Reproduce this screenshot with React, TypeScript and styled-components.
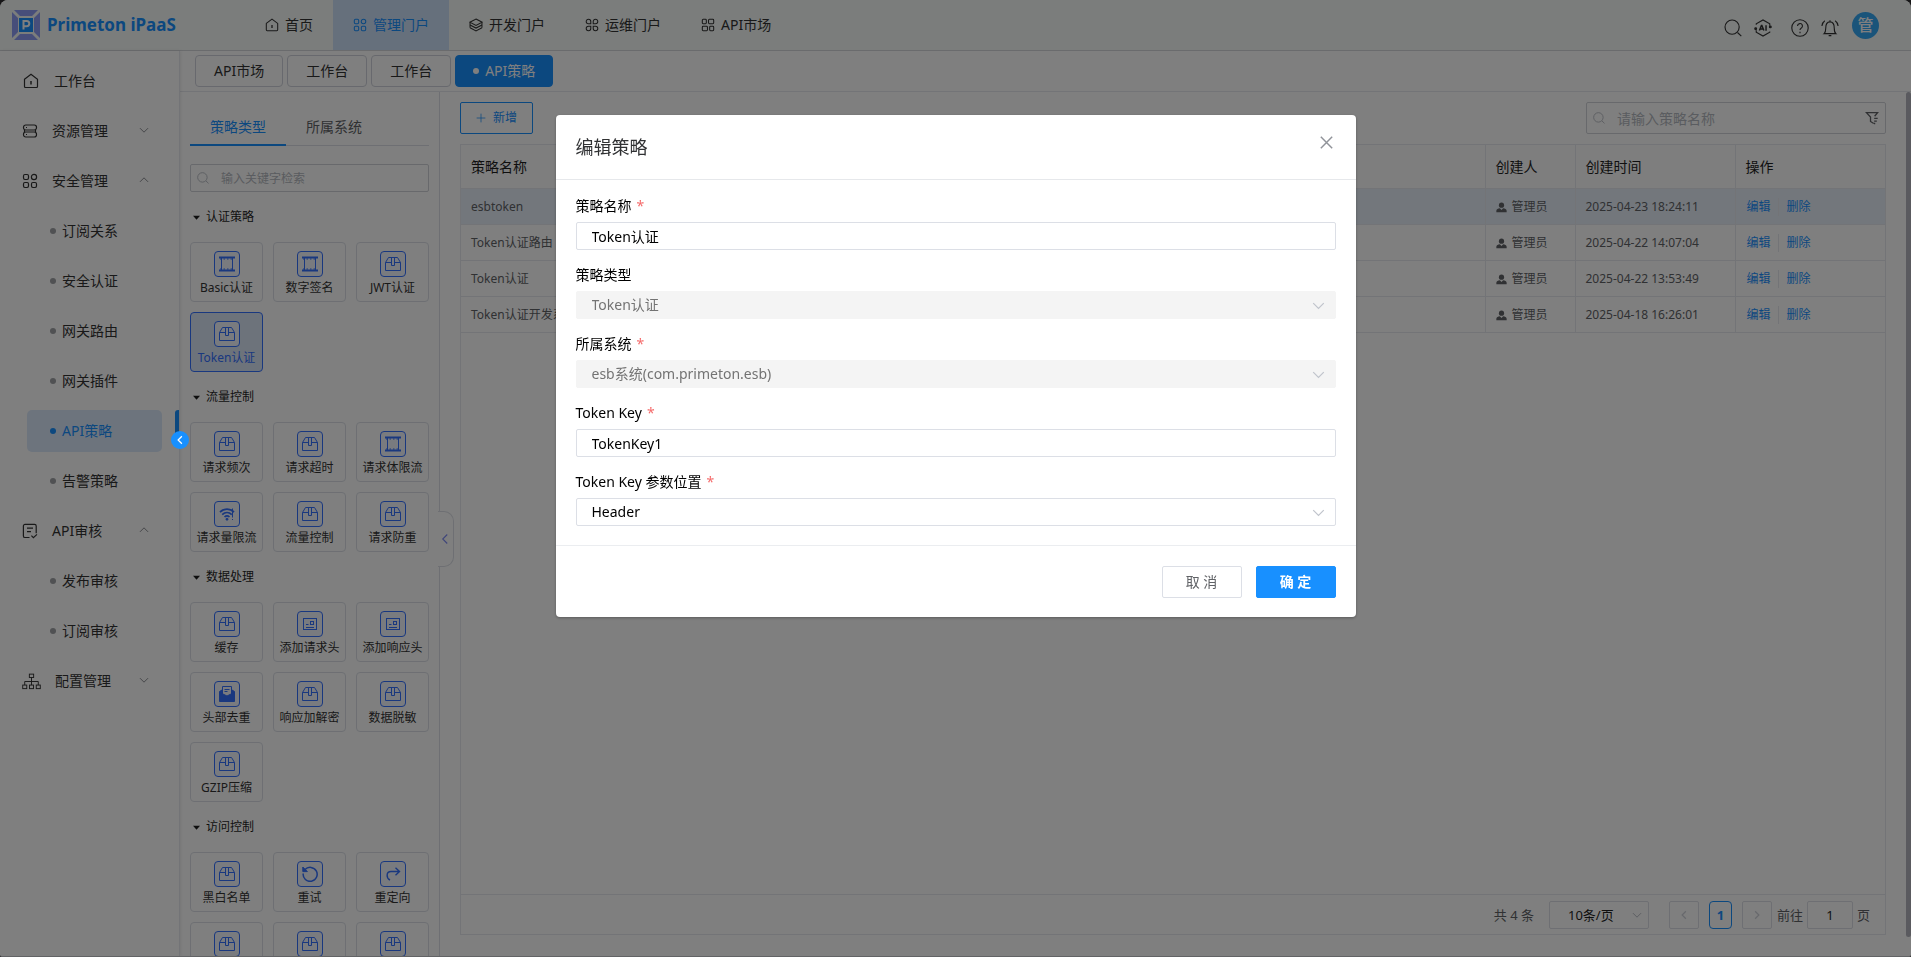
import React, { useState } from 'react';
import styled, { createGlobalStyle } from 'styled-components';

const c = {
  primary: '#1890ff',
  brand: '#3370ff',
  text: '#333333',
  text2: '#606266',
  muted: '#b4b8c0',
  border: '#dcdfe6',
  line: '#e6e8ee',
};

const GlobalStyle = createGlobalStyle`
  *, *::before, *::after { box-sizing: border-box; }
  html { background: #2c2d2f; }
  body {
    margin: 0;
    font-family: "Noto Sans", "Noto Sans CJK SC", sans-serif;
    font-size: 14px;
    line-height: 20px;
    color: ${c.text};
  }
  button, input, select { font: inherit; color: inherit; margin: 0; }
  button { cursor: pointer; padding: 0; background: none; border: 0; }
  svg { display: block; flex: none; }
  a { text-decoration: none; color: inherit; }
  ul { list-style: none; margin: 0; padding: 0; }
`;

/* ---------- icons ---------- */

type IconName =
  | 'home' | 'grid' | 'layers' | 'clover' | 'market' | 'server' | 'audit' | 'tree'
  | 'search' | 'ai' | 'help' | 'bell' | 'filter' | 'user'
  | 'down' | 'up' | 'left' | 'right' | 'close' | 'plus' | 'caret'
  | 'box' | 'film' | 'wifi' | 'card' | 'mail' | 'retry' | 'redirect';

const glyphs: Record<IconName, React.ReactNode> = {
  home: (
    <>
      <path d="M1.5 6.2 8 1.2l6.500 5v7.300a1 1 0 0 1-1 1h-11a1 1 0 0 1-1-1z" />
      <path d="M8 8v3.5" strokeWidth="1.5" />
    </>
  ),
  grid: (
    <>
      <rect x="1.5" y="1.5" width="5" height="5" rx="1.4" />
      <circle cx="12" cy="4" r="2.6" />
      <rect x="1.5" y="9.5" width="5" height="5" rx="1.4" />
      <rect x="9.5" y="9.5" width="5" height="5" rx="1.4" />
    </>
  ),
  layers: (
    <>
      <path d="M8 1.2 15 4.8 8 8.4 1 4.8z" />
      <path d="M1.2 8 8 11.5 14.8 8M1.2 11.2 8 14.7l6.8-3.5" />
      <path d="M1.2 5v6.2M14.8 5v6.2" />
    </>
  ),
  clover: (
    <path d="M6.6 6.6H4A2.6 2.6 0 1 1 6.6 4zM9.4 6.6H12A2.6 2.6 0 1 0 9.4 4zM6.6 9.4H4A2.6 2.6 0 1 0 6.6 12zM9.4 9.4H12A2.6 2.6 0 1 1 9.4 12z" />
  ),
  market: (
    <>
      <rect x="1.5" y="1.5" width="4.6" height="5" rx="1" />
      <rect x="8.6" y="1.5" width="5.9" height="5" rx="1" />
      <rect x="1.5" y="9.5" width="5.9" height="5" rx="1" />
      <rect x="9.9" y="9.5" width="4.6" height="5" rx="1" />
    </>
  ),
  server: (
    <>
      <rect x="1.5" y="2" width="13" height="5" rx="2.2" />
      <rect x="1.5" y="9" width="13" height="5" rx="2.2" />
      <path d="M2.5 7v2M13.5 7v2M4 4.5h1M4 11.5h1" />
    </>
  ),
  audit: (
    <>
      <path d="M7.5 14.5H3a1.6 1.6 0 0 1-1.6-1.6V3A1.6 1.6 0 0 1 3 1.4h9.6A1.6 1.6 0 0 1 14.2 3v7.2" />
      <path d="M5 5.2h6M5 8.6h4M9.4 12.6l2 2 3.6-3.2" />
    </>
  ),
  tree: (
    <>
      <rect x="6.2" y="1.8" width="3.6" height="2.8" />
      <rect x=".6" y="11" width="3.4" height="3" />
      <rect x="6.3" y="11" width="3.4" height="3" />
      <rect x="12" y="11" width="3.4" height="3" />
      <path d="M8 4.6V11M2.3 11V8h11.4v3" />
    </>
  ),
  search: (
    <>
      <circle cx="7.2" cy="7.2" r="6.3" />
      <path d="m12 12 3.4 3.2" />
    </>
  ),
  ai: (
    <>
      <path d="M2 5V4.2L8 .8l6 3.4V6M14 11v.8l-6 3.4-6-3.4V10" />
      <path d="M4.8 10.3 6.6 5.8h.4l1.8 4.5M5.5 8.9h2.6M10.7 5.6v4.8" strokeWidth="1.3" />
      <circle cx="14.5" cy="7" r=".8" fill="currentColor" />
      <circle cx="1.5" cy="8.6" r=".8" fill="currentColor" />
    </>
  ),
  help: (
    <>
      <circle cx="8" cy="8" r="7.3" />
      <path d="M5.8 6.2a2.2 2.2 0 1 1 3.2 2c-.7.4-1 .8-1 1.6" />
      <path d="M8 11.4v1.2" />
    </>
  ),
  bell: (
    <>
      <path d="M2.8 13c1.2-1 1.4-2.3 1.4-4.8C4.2 4.8 5.5 2.6 8 2.6s3.8 2.2 3.8 5.6c0 2.5.2 3.8 1.4 4.8z" />
      <path d="M8 1v1.5M6.8 14.8h2.4" />
      <path d="M3.4 1.6C1.9 2.7 1 4.1.8 6.2M12.6 1.6c1.5 1.1 2.4 2.5 2.6 4.6" />
    </>
  ),
  filter: (
    <>
      <path d="M10 14.3 6.3 12V7L1.6 1.800h12.800L11 6" />
      <path d="M10.5 8.5h4M10.5 11.5h3M10.2 14.3h1.5" />
    </>
  ),
  user: (
    <g fill="currentColor" stroke="none">
      <circle cx="8" cy="4.6" r="3.8" />
      <path d="M.5 15v-2.2C.5 10.8 3 9.4 5.6 9.2L8 11.6l2.4-2.400c2.600.2 5.100 1.600 5.100 3.600V15z" />
    </g>
  ),
  down: <path d="m1.5 5 6.5 6.5L14.5 5" />,
  up: <path d="M1.5 11 8 4.5l6.5 6.5" />,
  left: <path d="M11 2 5 8l6 6" />,
  right: <path d="m5 2 6 6-6 6" />,
  close: <path d="m1 1 14 14M15 1 1 15" />,
  plus: <path d="M8 1v14M1 8h14" />,
  caret: <path d="M0 4h16L8 13z" fill="currentColor" stroke="none" />,
  box: (
    <>
      <path d="M.5 6.5v8h15v-8L12.5 1.5h-9z" />
      <path d="M.5 6.5h6M9.5 6.5h6M6.5 1.5v8h3v-8" />
    </>
  ),
  film: (
    <>
      <path d="M2.5 2v12M13.5 2v12" />
      <path d="M0 1.5h16M0 14.5h16" strokeWidth="2" />
      <path d="M1 3h14M1 13h14" strokeDasharray="1.5 2" />
    </>
  ),
  wifi: (
    <>
      <path d="M1 6.2c4-4 10-4 14 0M3.2 8.6c2.8-2.7 6.8-2.7 9.6 0M5.5 11c1.5-1.4 3.5-1.4 5 0" strokeWidth="1.7" />
      <circle cx="8" cy="13.2" r="1" fill="currentColor" />
      <path d="M13.5 2.5v9M13.5 13v1" />
    </>
  ),
  card: (
    <>
      <rect x="1.5" y="2.5" width="13" height="11" />
      <rect x="8.5" y="5.5" width="3" height="3" />
      <path d="M4 8.5h2.5M4 11.5h8" />
    </>
  ),
  mail: (
    <>
      <path d="M.5 5.5 3 4v3.500l5 2.500 5-2.500V4l2.500 1.500v10H.5z" fill="currentColor" />
      <path d="M3.5 8V.5h9V8M5.5 3.5h5M5.5 5.5h3" />
    </>
  ),
  retry: (
    <>
      <path d="M3 3.6A7 7 0 1 1 1.2 7.5" strokeWidth="1.5" />
      <path d="M.8 1v4.6h4.6z" fill="currentColor" />
    </>
  ),
  redirect: <path d="M5 14C1 12 1 5.5 6 5.5h8M10.5 1.8l4 3.7-4 3.7" strokeWidth="1.4" />,
};

const Icon = ({ name, size = 16, weight = 1.2 }: { name: IconName; size?: number; weight?: number }) => (
  <svg width={size} height={size} viewBox="0 0 16 16" fill="none" stroke="currentColor" strokeWidth={weight} aria-hidden="true">
    {glyphs[name]}
  </svg>
);

const LogoMark = () => (
  <svg width="28" height="30" viewBox="0 0 28 30" aria-hidden="true">
    <path d="M2 0h24l-6 6H8z M2 30h24l-6-6H8z M0 2l6 6v14l-6 6z M28 2l-6 6v14l6 6z" fill="#8f9cf5" />
    <rect x="7" y="8" width="14" height="14" fill={c.primary} />
    <path d="M11.5 19.5V11h3.200a2.500 2.500 0 0 1 0 5.200h-3" fill="none" stroke="#fff" strokeWidth="2" />
  </svg>
);

/* ---------- page frame ---------- */

const Page = styled.div`
  display: flex;
  flex-direction: column;
  height: 100vh;
  overflow: hidden;
  background: #fff;
  border-radius: 8px 8px 2px 2px;
  border-bottom: 1px solid #c4c6ca;
`;

const Header = styled.header`
  display: flex;
  flex: none;
  height: 51px;
  background: #f6faf8;
  border-bottom: 1px solid #d4d6da;
`;

const Brand = styled.a`
  display: flex;
  align-items: center;
  gap: 7px;
  width: 245px;
  padding-left: 12px;
  font-size: 17px;
  font-weight: 700;
  color: ${c.primary};
`;

const TopNav = styled.nav`
  display: flex;
  flex: 1;
`;

const TopLink = styled.a<{ $active?: boolean }>`
  display: flex;
  align-items: center;
  gap: 6px;
  padding: 0 20px;
  color: ${(p) => (p.$active ? c.primary : c.text)};
  background: ${(p) => (p.$active ? '#cde1f8' : 'transparent')};
`;

const HeaderTools = styled.div`
  display: flex;
  align-items: center;
  gap: 13px;
  padding-right: 32px;
`;

const ToolPair = styled.div`
  display: flex;
  gap: 12px;
  padding: 5px 6px 0 0;
  & + & { padding-right: 0; }
`;

const Avatar = styled.button`
  width: 27px;
  height: 27px;
  border-radius: 50%;
  background: #35a8f5;
  color: #fff;
  font-size: 16px;
  font-weight: 500;
`;

const Body = styled.div`
  display: flex;
  flex: 1;
  min-height: 0;
`;

const Sidebar = styled.aside`
  position: relative;
  flex: none;
  width: 180px;
  padding-top: 5px;
  border-right: 1px solid ${c.line};
  box-shadow: 1px 0 3px rgba(0, 0, 0, 0.08);
`;

const MenuLink = styled.a<{ $wide?: boolean }>`
  display: flex;
  align-items: center;
  height: 50px;
  padding: 0 30px 0 ${(p) => (p.$wide ? '23px' : '22px')};
  gap: ${(p) => (p.$wide ? '15px' : '14px')};
  & > span { flex: 1; }
`;

const MenuArrow = styled.i`
  padding-bottom: 3px;
  color: #85888e;
`;

const SubItem = styled.li`
  padding: 4px 17px 4px 27px;
`;

const SubLink = styled.a<{ $active?: boolean }>`
  display: flex;
  align-items: center;
  gap: 6px;
  height: 42px;
  padding-left: 23px;
  border-radius: 5px;
  color: ${(p) => (p.$active ? c.primary : c.text)};
  background: ${(p) => (p.$active ? '#dbe9fa' : 'transparent')};
  &::before {
    content: '';
    width: 6px;
    height: 6px;
    border-radius: 50%;
    background: ${(p) => (p.$active ? c.primary : '#a0a2a6')};
  }
`;

const SideMark = styled.span`
  position: absolute;
  right: 0;
  top: 359px;
  width: 4px;
  height: 32px;
  border-radius: 3px 0 0 0;
  background: ${c.primary};
`;

const SideToggle = styled.button`
  position: absolute;
  right: -10px;
  top: 380px;
  z-index: 1;
  display: grid;
  place-items: center;
  width: 18px;
  height: 18px;
  border-radius: 50%;
  background: ${c.primary};
  color: #fff;
`;

const Workspace = styled.div`
  display: flex;
  flex: 1;
  flex-direction: column;
  min-width: 0;
`;

const PageTabs = styled.nav`
  display: flex;
  flex: none;
  align-items: center;
  gap: 4px;
  height: 41px;
  padding: 0 16px 0 15px;
  border-bottom: 1px solid ${c.line};
`;

const PageTab = styled.button<{ $active?: boolean }>`
  display: flex;
  align-items: center;
  gap: 6px;
  height: 32px;
  padding: 0 ${(p) => (p.$active ? '17px' : '18px')};
  border: 1px solid ${(p) => (p.$active ? c.primary : '#d0d2dc')};
  border-radius: 4px;
  background: ${(p) => (p.$active ? c.primary : '#fff')};
  color: ${(p) => (p.$active ? '#fff' : c.text)};
`;

const TabDot = styled.i`
  width: 6px;
  height: 6px;
  border-radius: 50%;
  background: #fff;
`;

const Content = styled.div`
  display: flex;
  flex: 1;
  min-height: 0;
`;

/* ---------- policy catalogue ---------- */

const Catalogue = styled.section`
  position: relative;
  flex: none;
  width: 260px;
  padding: 18px 10px 0;
  border-right: 1px solid ${c.border};
`;

const CatalogueTabs = styled.div`
  display: flex;
  border-bottom: 1px solid ${c.border};
`;

const CatalogueTab = styled.button<{ $active?: boolean }>`
  height: 36px;
  margin-bottom: -1px;
  padding: 0 20px;
  border-bottom: 2px solid ${(p) => (p.$active ? c.primary : 'transparent')};
  color: ${(p) => (p.$active ? c.primary : c.text2)};
`;

const SearchBox = styled.label<{ $large?: boolean }>`
  display: flex;
  align-items: center;
  gap: 12px;
  width: ${(p) => (p.$large ? '300px' : 'auto')};
  height: ${(p) => (p.$large ? '32px' : '28px')};
  padding: 0 6px;
  border: 1px solid #d0d2d8;
  border-radius: 2px;
  color: ${c.muted};
  font-size: ${(p) => (p.$large ? '14px' : '12px')};
  & > button { color: ${c.text2}; }
`;

const SearchInput = styled.input`
  flex: 1;
  min-width: 0;
  padding: 1px 0 0;
  border: 0;
  outline: 0;
  background: transparent;
  color: ${c.text};
  &::placeholder { color: ${c.muted}; opacity: 1; }
`;

const CatalogueSearch = styled.div`
  padding-top: 18px;
`;

const GroupTitle = styled.button`
  display: flex;
  align-items: center;
  gap: 6px;
  width: 100%;
  height: 50px;
  padding-left: 3px;
  font-size: 12px;
  color: #1f1f1f;
`;

const Tiles = styled.div`
  display: grid;
  grid-template-columns: repeat(3, 1fr);
  gap: 10px;
`;

const Tile = styled.button<{ $active?: boolean }>`
  display: flex;
  flex-direction: column;
  align-items: center;
  gap: 2px;
  height: 60px;
  padding-top: 8px;
  border: 1px solid ${(p) => (p.$active ? c.brand : c.border)};
  border-radius: 4px;
  background: ${(p) => (p.$active ? '#dbe6f6' : '#fff')};
  color: ${(p) => (p.$active ? c.brand : c.text)};
  font-size: 12px;
  line-height: 18px;
  white-space: nowrap;
`;

const TileIcon = styled.span`
  display: grid;
  place-items: center;
  width: 26px;
  height: 26px;
  border: 1px solid ${c.brand};
  border-radius: 4px;
  background: #f3f7ff;
  color: ${c.brand};
`;

const PanelToggle = styled.button`
  position: absolute;
  left: 258px;
  top: 419px;
  display: flex;
  align-items: center;
  width: 16px;
  height: 56px;
  padding-left: 1px;
  border: 1px solid ${c.border};
  border-left: 0;
  border-radius: 0 10px 10px 0;
  background: #fff;
  color: #7f8cf5;
`;

/* ---------- policy list ---------- */

const ListPane = styled.main`
  display: flex;
  flex: 1;
  flex-direction: column;
  gap: 10px;
  min-width: 0;
  padding: 10px 20px 21px 20px;
`;

const Toolbar = styled.div`
  display: flex;
  justify-content: space-between;
`;

const AddButton = styled.button`
  display: flex;
  align-items: center;
  gap: 7px;
  height: 32px;
  padding: 0 15px;
  border: 1px solid ${c.primary};
  border-radius: 2px;
  color: ${c.primary};
  font-size: 12px;
`;

const TableCard = styled.div`
  display: flex;
  flex: 1;
  flex-direction: column;
  justify-content: space-between;
  border: 1px solid ${c.line};
`;

const Table = styled.table`
  width: 100%;
  table-layout: fixed;
  border-collapse: collapse;
  text-align: left;
`;

const Th = styled.th`
  height: 43px;
  padding: 2px 10px 0;
  background: #fcfcfc;
  border-bottom: 1px solid ${c.line};
  font-weight: 400;
  color: #1f1f1f;
  & + & { border-left: 1px solid ${c.line}; }
`;

const Row = styled.tr<{ $active?: boolean }>`
  background: ${(p) => (p.$active ? '#e7eff9' : '#fff')};
`;

const Td = styled.td`
  height: 36px;
  padding: 2px 10px 0;
  border-bottom: 1px solid ${c.line};
  font-size: 12px;
  line-height: 18px;
  color: ${c.text2};
  & + & { border-left: 1px solid ${c.line}; }
`;

const Creator = styled.span`
  display: flex;
  align-items: center;
  gap: 5px;
`;

const Actions = styled.span`
  display: flex;
  align-items: center;
  color: ${c.primary};
  & > a { padding: 0 7px 0 1px; }
  & > a + a { padding: 0 8px; border-left: 1px solid ${c.line}; }
`;

const NameCol = styled.col``;
const FixedCol = styled.col<{ $w: number }>`
  width: ${(p) => p.$w}px;
`;

const Pager = styled.div`
  display: flex;
  align-items: center;
  justify-content: flex-end;
  height: 40px;
  padding-right: 15px;
  border-top: 1px solid ${c.line};
  font-size: 13px;
  color: ${c.text2};
`;

const PageSize = styled.span`
  display: grid;
  align-items: center;
  width: 100px;
  margin: 0 20px 0 15px;
  & > * { grid-area: 1 / 1; }
  & > svg { justify-self: end; margin-right: 7px; color: ${c.muted}; pointer-events: none; }
`;

const PageSizeSelect = styled.select`
  appearance: none;
  height: 28px;
  padding: 0 18px;
  border: 1px solid ${c.border};
  border-radius: 2px;
  background: #fff;
  color: #1f1f1f;
`;

const PageButton = styled.button<{ $current?: boolean }>`
  display: grid;
  place-items: center;
  width: ${(p) => (p.$current ? '23px' : '30px')};
  height: 28px;
  margin: ${(p) => (p.$current ? '0 10px' : '0')};
  border: 1px solid ${(p) => (p.$current ? c.primary : c.border)};
  border-radius: ${(p) => (p.$current ? '4px' : '2px')};
  color: ${(p) => (p.$current ? c.primary : '#d0d3da')};
  font-weight: 700;
`;

const Jump = styled.label`
  display: flex;
  align-items: center;
  gap: 4px;
  padding-left: 5px;
`;

const JumpInput = styled.input`
  width: 46px;
  height: 28px;
  padding: 0;
  border: 1px solid ${c.border};
  border-radius: 2px;
  text-align: center;
  color: #1f1f1f;
`;

const ScrollRail = styled.div`
  flex: none;
  width: 5px;
  margin-bottom: 19px;
  border-radius: 3px;
  background: #b4b5be;
`;

/* ---------- dialog ---------- */

const Backdrop = styled.div`
  position: fixed;
  inset: 0;
  display: flex;
  align-items: flex-start;
  justify-content: center;
  padding-top: 115px;
  background: rgba(0, 0, 0, 0.5);
`;

const Dialog = styled.form`
  width: 800px;
  max-width: 100%;
  background: #fff;
  border-radius: 4px;
  box-shadow: 0 1px 3px rgba(0, 0, 0, 0.3);
`;

const DialogHead = styled.div`
  display: flex;
  align-items: center;
  justify-content: space-between;
  height: 65px;
  padding: 0 23px 0 20px;
  border-bottom: 1px solid #e6e8eb;
  & > button { padding-bottom: 9px; color: #909399; }
`;

const DialogTitle = styled.h2`
  margin: 0;
  font-size: 18px;
  line-height: 24px;
  font-weight: 400;
  color: #303133;
`;

const DialogBody = styled.div`
  display: flex;
  flex-direction: column;
  gap: 14px;
  padding: 15px 20px 19px;
`;

const FieldBox = styled.div`
  display: flex;
  flex-direction: column;
  gap: 5px;
`;

const FieldLabel = styled.label`
  line-height: 22px;
  color: #000;
`;

const Required = styled.span`
  margin-left: 5px;
  color: #f56c6c;
`;

const TextInput = styled.input`
  width: 100%;
  height: 28px;
  padding: 0 15px;
  border: 1px solid ${c.border};
  border-radius: 2px;
  outline: 0;
  background: #fff;
  color: #000;
`;

const SelectWrap = styled.span`
  display: grid;
  align-items: center;
  & > * { grid-area: 1 / 1; }
  & > svg { justify-self: end; margin-right: 11px; color: #c0c4cc; pointer-events: none; }
`;

const SelectInput = styled.select`
  appearance: none;
  width: 100%;
  height: 28px;
  padding: 0 15px;
  border: 1px solid ${c.border};
  border-radius: 2px;
  outline: 0;
  background: #fff;
  color: #000;
  &:disabled {
    border-color: #f4f4f4;
    background: #f4f4f4;
    color: #737373;
    opacity: 1;
  }
`;

const DialogFoot = styled.div`
  display: flex;
  justify-content: flex-end;
  gap: 14px;
  padding: 20px 20px 19px;
  border-top: 1px solid #ebedf0;
`;

const DialogButton = styled.button<{ $primary?: boolean }>`
  width: 80px;
  height: 32px;
  border: 1px solid ${(p) => (p.$primary ? c.primary : c.border)};
  border-radius: 2px;
  background: ${(p) => (p.$primary ? c.primary : '#fff')};
  color: ${(p) => (p.$primary ? '#fff' : c.text2)};
  font-weight: ${(p) => (p.$primary ? 700 : 400)};
`;

/* ---------- data ---------- */

const topLinks: { icon: IconName; label: string }[] = [
  { icon: 'home', label: '首页' },
  { icon: 'grid', label: '管理门户' },
  { icon: 'layers', label: '开发门户' },
  { icon: 'clover', label: '运维门户' },
  { icon: 'market', label: 'API市场' },
];

type MenuEntry = { icon: IconName; label: string; arrow?: 'up' | 'down'; wide?: boolean; children?: string[] };

const menu: MenuEntry[] = [
  { icon: 'home', label: '工作台', wide: true },
  { icon: 'server', label: '资源管理', arrow: 'down' },
  {
    icon: 'grid', label: '安全管理', arrow: 'up',
    children: ['订阅关系', '安全认证', '网关路由', '网关插件', 'API策略', '告警策略'],
  },
  { icon: 'audit', label: 'API审核', arrow: 'up', children: ['发布审核', '订阅审核'] },
  { icon: 'tree', label: '配置管理', arrow: 'down' },
];

const groups: { title: string; items: [IconName, string][] }[] = [
  { title: '认证策略', items: [['film', 'Basic认证'], ['film', '数字签名'], ['box', 'JWT认证'], ['box', 'Token认证']] },
  {
    title: '流量控制',
    items: [
      ['box', '请求频次'], ['box', '请求超时'], ['film', '请求体限流'],
      ['wifi', '请求量限流'], ['box', '流量控制'], ['box', '请求防重'],
    ],
  },
  {
    title: '数据处理',
    items: [
      ['box', '缓存'], ['card', '添加请求头'], ['card', '添加响应头'],
      ['mail', '头部去重'], ['box', '响应加解密'], ['box', '数据脱敏'], ['box', 'GZIP压缩'],
    ],
  },
  {
    title: '访问控制',
    items: [['box', '黑白名单'], ['retry', '重试'], ['redirect', '重定向'], ['box', ''], ['box', ''], ['box', '']],
  },
];

const policies = [
  { name: 'esbtoken', time: '2025-04-23 18:24:11' },
  { name: 'Token认证路由', time: '2025-04-22 14:07:04' },
  { name: 'Token认证', time: '2025-04-22 13:53:49' },
  { name: 'Token认证开发系统', time: '2025-04-18 16:26:01' },
];

/* ---------- views ---------- */

const Field = ({ id, label, required, children }: { id: string; label: string; required?: boolean; children: React.ReactNode }) => (
  <FieldBox>
    <FieldLabel htmlFor={id}>
      {label}
      {required && <Required>*</Required>}
    </FieldLabel>
    {children}
  </FieldBox>
);

const SelectField = ({ id, options, disabled }: { id: string; options: string[]; disabled?: boolean }) => (
  <SelectWrap>
    <SelectInput id={id} disabled={disabled}>
      {options.map((o) => <option key={o}>{o}</option>)}
    </SelectInput>
    <Icon name="down" size={13} weight={1.5} />
  </SelectWrap>
);

const EditDialog = ({ onClose }: { onClose: () => void }) => (
  <Backdrop>
    <Dialog role="dialog" aria-modal="true" aria-labelledby="dialog-title" onSubmit={(e) => { e.preventDefault(); onClose(); }}>
      <DialogHead>
        <DialogTitle id="dialog-title">编辑策略</DialogTitle>
        <button type="button" aria-label="关闭" onClick={onClose}><Icon name="close" size={13} weight={1.8} /></button>
      </DialogHead>
      <DialogBody>
        <Field id="policy-name" label="策略名称" required>
          <TextInput id="policy-name" defaultValue="Token认证" />
        </Field>
        <Field id="policy-type" label="策略类型">
          <SelectField id="policy-type" options={['Token认证']} disabled />
        </Field>
        <Field id="policy-system" label="所属系统" required>
          <SelectField id="policy-system" options={['esb系统(com.primeton.esb)']} disabled />
        </Field>
        <Field id="token-key" label="Token Key" required>
          <TextInput id="token-key" defaultValue="TokenKey1" />
        </Field>
        <Field id="token-place" label="Token Key 参数位置" required>
          <SelectField id="token-place" options={['Header']} />
        </Field>
      </DialogBody>
      <DialogFoot>
        <DialogButton type="button" onClick={onClose}>取 消</DialogButton>
        <DialogButton type="submit" $primary>确 定</DialogButton>
      </DialogFoot>
    </Dialog>
  </Backdrop>
);

const SideMenu = () => (
  <Sidebar>
    <ul>
      {menu.map((m) => (
        <li key={m.label}>
          <MenuLink href="#" $wide={m.wide}>
            <Icon name={m.icon} size={m.icon === 'tree' ? 19 : 16} weight={m.icon === 'tree' ? 0.8 : 1.2} />
            <span>{m.label}</span>
            {m.arrow && <MenuArrow><Icon name={m.arrow} size={10} weight={1.5} /></MenuArrow>}
          </MenuLink>
          {m.children && (
            <ul>
              {m.children.map((s) => (
                <SubItem key={s}><SubLink href="#" $active={s === 'API策略'}>{s}</SubLink></SubItem>
              ))}
            </ul>
          )}
        </li>
      ))}
    </ul>
    <SideMark />
    <SideToggle aria-label="收起菜单"><Icon name="left" size={10} weight={2} /></SideToggle>
  </Sidebar>
);

const PolicyCatalogue = () => (
  <Catalogue>
    <CatalogueTabs>
      <CatalogueTab $active>策略类型</CatalogueTab>
      <CatalogueTab>所属系统</CatalogueTab>
    </CatalogueTabs>
    <CatalogueSearch>
      <SearchBox>
        <Icon name="search" size={12} />
        <SearchInput placeholder="输入关键字检索" aria-label="输入关键字检索" />
      </SearchBox>
    </CatalogueSearch>
    {groups.map((g) => (
      <div key={g.title}>
        <GroupTitle><Icon name="caret" size={7} />{g.title}</GroupTitle>
        <Tiles>
          {g.items.map(([icon, label], i) => (
            <Tile key={i} $active={label === 'Token认证'}>
              <TileIcon><Icon name={icon} size={16} weight={1} /></TileIcon>
              {label}
            </Tile>
          ))}
        </Tiles>
      </div>
    ))}
    <PanelToggle aria-label="收起面板"><Icon name="left" size={12} weight={1.5} /></PanelToggle>
  </Catalogue>
);

const PolicyList = () => (
  <ListPane>
    <Toolbar>
      <AddButton><Icon name="plus" size={10} />新增</AddButton>
      <SearchBox $large>
        <Icon name="search" size={12} />
        <SearchInput placeholder="请输入策略名称" aria-label="请输入策略名称" />
        <button type="button" aria-label="筛选"><Icon name="filter" size={14} weight={1.5} /></button>
      </SearchBox>
    </Toolbar>
    <TableCard>
      <Table>
        <colgroup>
          <NameCol />
          <FixedCol $w={90} />
          <FixedCol $w={160} />
          <FixedCol $w={150} />
        </colgroup>
        <thead>
          <tr><Th>策略名称</Th><Th>创建人</Th><Th>创建时间</Th><Th>操作</Th></tr>
        </thead>
        <tbody>
          {policies.map((p, i) => (
            <Row key={p.time} $active={i === 0}>
              <Td>{p.name}</Td>
              <Td><Creator><Icon name="user" size={11} />管理员</Creator></Td>
              <Td>{p.time}</Td>
              <Td><Actions><a href="#">编辑</a><a href="#">删除</a></Actions></Td>
            </Row>
          ))}
        </tbody>
      </Table>
      <Pager>
        <span>共 4 条</span>
        <PageSize>
          <PageSizeSelect aria-label="每页条数"><option>10条/页</option></PageSizeSelect>
          <Icon name="down" size={10} weight={1.5} />
        </PageSize>
        <PageButton aria-label="上一页"><Icon name="left" size={10} weight={2} /></PageButton>
        <PageButton $current>1</PageButton>
        <PageButton aria-label="下一页"><Icon name="right" size={10} weight={2} /></PageButton>
        <Jump>前往<JumpInput defaultValue="1" />页</Jump>
      </Pager>
    </TableCard>
  </ListPane>
);

export default function App() {
  const [open, setOpen] = useState(true);
  return (
    <>
      <GlobalStyle />
      <Page>
        <Header>
          <Brand href="#"><LogoMark />Primeton iPaaS</Brand>
          <TopNav>
            {topLinks.map((l) => (
              <TopLink key={l.label} href="#" $active={l.label === '管理门户'}>
                <Icon name={l.icon} size={14} />{l.label}
              </TopLink>
            ))}
          </TopNav>
          <HeaderTools>
            <ToolPair>
              <button aria-label="搜索"><Icon name="search" size={18} weight={1} /></button>
              <button aria-label="AI助手"><Icon name="ai" size={18} weight={1} /></button>
            </ToolPair>
            <ToolPair>
              <button aria-label="帮助"><Icon name="help" size={18} weight={1} /></button>
              <button aria-label="通知"><Icon name="bell" size={18} weight={1} /></button>
            </ToolPair>
            <Avatar>管</Avatar>
          </HeaderTools>
        </Header>
        <Body>
          <SideMenu />
          <Workspace>
            <PageTabs>
              <PageTab>API市场</PageTab>
              <PageTab>工作台</PageTab>
              <PageTab>工作台</PageTab>
              <PageTab $active><TabDot />API策略</PageTab>
            </PageTabs>
            <Content>
              <PolicyCatalogue />
              <PolicyList />
              <ScrollRail aria-hidden="true" />
            </Content>
          </Workspace>
        </Body>
      </Page>
      {open && <EditDialog onClose={() => setOpen(false)} />}
    </>
  );
}
